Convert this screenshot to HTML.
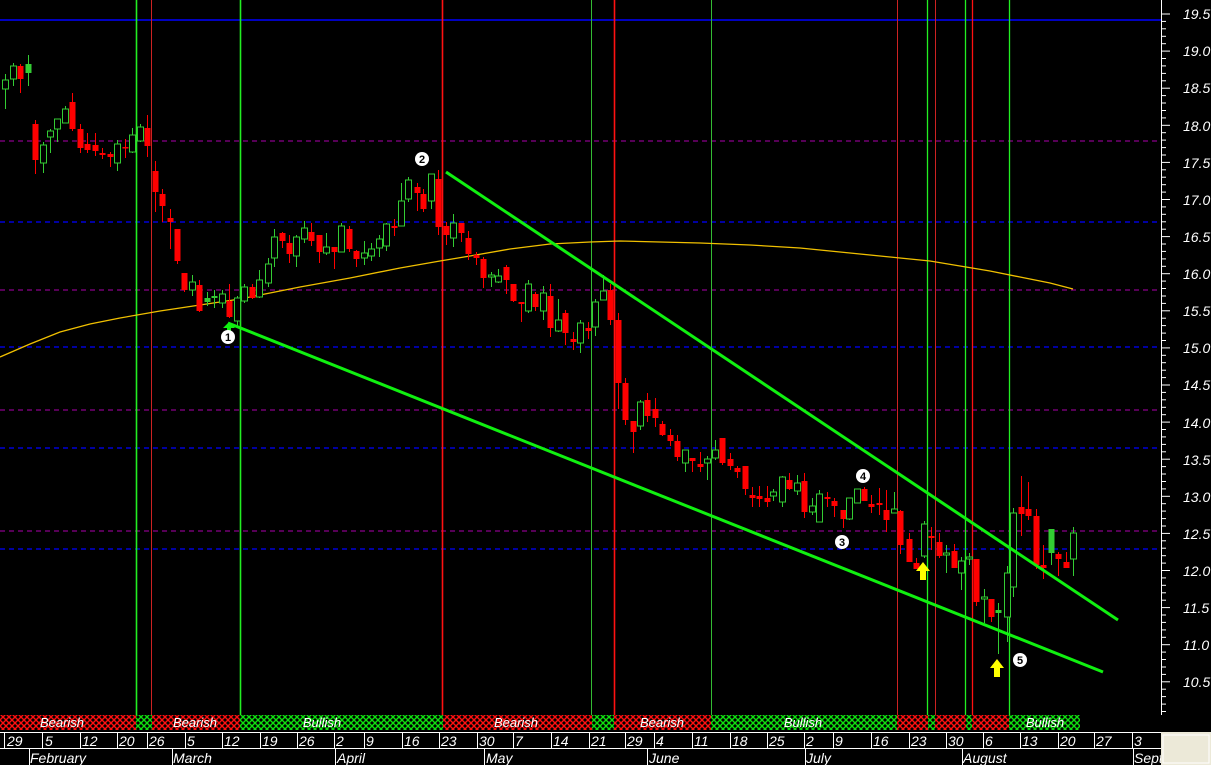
<!DOCTYPE html>
<html><head><meta charset="utf-8"><style>
html,body{margin:0;padding:0;background:#000;width:1211px;height:765px;overflow:hidden}
svg{display:block}
text{font-family:"Liberation Sans",sans-serif;font-style:italic;fill:#fff}
</style></head><body>
<svg id="c" width="1211" height="765" viewBox="0 0 1211 765" xmlns="http://www.w3.org/2000/svg">
<defs>
<pattern id="pr" width="6" height="6" patternUnits="userSpaceOnUse"><rect width="6" height="6" fill="#000"/><path d="M0 0L6 6M6 0L0 6" stroke="#ff1010" stroke-width="1.4"/></pattern>
<pattern id="pg" width="6" height="6" patternUnits="userSpaceOnUse"><rect width="6" height="6" fill="#000"/><path d="M0 0L6 6M6 0L0 6" stroke="#10e010" stroke-width="1.4"/></pattern>
</defs>
<rect width="1211" height="765" fill="#000"/>
<line x1="0" y1="20" x2="1161" y2="20" stroke="#0000ff" stroke-width="1.5"/>
<g stroke-dasharray="5,4" stroke-width="1.2">
<line x1="0" y1="141" x2="1161" y2="141" stroke="#8a008a"/>
<line x1="0" y1="222" x2="1161" y2="222" stroke="#0000ff"/>
<line x1="0" y1="290" x2="1161" y2="290" stroke="#8a008a"/>
<line x1="0" y1="347" x2="1161" y2="347" stroke="#0000ff"/>
<line x1="0" y1="410" x2="1161" y2="410" stroke="#8a008a"/>
<line x1="0" y1="448" x2="1161" y2="448" stroke="#0000ff"/>
<line x1="0" y1="531" x2="1161" y2="531" stroke="#8a008a"/>
<line x1="0" y1="549" x2="1161" y2="549" stroke="#0000ff"/>
</g>
<g>
<line x1="136.5" y1="0" x2="136.5" y2="715" stroke="#22ee22" stroke-width="1.6"/>
<line x1="151.5" y1="0" x2="151.5" y2="715" stroke="#cc2222" stroke-width="1"/>
<line x1="240.5" y1="0" x2="240.5" y2="715" stroke="#22ee22" stroke-width="1.6"/>
<line x1="442.5" y1="0" x2="442.5" y2="715" stroke="#ff1111" stroke-width="1.6"/>
<line x1="591.5" y1="0" x2="591.5" y2="715" stroke="#33bb33" stroke-width="1"/>
<line x1="614.5" y1="0" x2="614.5" y2="715" stroke="#ff1111" stroke-width="1.6"/>
<line x1="711.5" y1="0" x2="711.5" y2="715" stroke="#33bb33" stroke-width="1"/>
<line x1="897.5" y1="0" x2="897.5" y2="715" stroke="#cc2222" stroke-width="1"/>
<line x1="927.5" y1="0" x2="927.5" y2="715" stroke="#22ee22" stroke-width="1.3"/>
<line x1="935.5" y1="0" x2="935.5" y2="715" stroke="#cc2222" stroke-width="1"/>
<line x1="965.5" y1="0" x2="965.5" y2="715" stroke="#22ee22" stroke-width="1.3"/>
<line x1="972.5" y1="0" x2="972.5" y2="715" stroke="#ff1111" stroke-width="1.3"/>
<line x1="1009.5" y1="0" x2="1009.5" y2="715" stroke="#22ee22" stroke-width="1.3"/>
</g>
<polyline fill="none" stroke="#f0c000" stroke-width="1.3" points="0,357 30,344 60,332 90,324 120,318 160,311 200,305 240,299 270,293 300,287 350,278 400,268 440,261 470,256 510,249 550,244 590,242 620,241 660,242 700,243 750,245 800,248 850,253 900,258 930,261 960,266 990,271 1020,277 1050,283 1073,289"/>
<g id="candles"></g>
<line x1="446" y1="172" x2="1118" y2="620" stroke="#10f010" stroke-width="3"/>
<line x1="228" y1="323" x2="1103" y2="672" stroke="#10f010" stroke-width="3"/>
<path d="M229 322 L223 328 L227 328 L227 334 L231 334 L231 328 L235 328 Z" fill="#10f010"/>
<path d="M923 562 L916 571 L920 571 L920 580 L926 580 L926 571 L930 571 Z" fill="#ffff00"/>
<path d="M997 659 L990 668 L994 668 L994 677 L1000 677 L1000 668 L1004 668 Z" fill="#ffff00"/>
<g font-size="11" font-weight="bold" text-anchor="middle">
<circle cx="228" cy="337" r="7" fill="#fff"/><text x="228" y="341" style="fill:#000;font-style:normal">1</text>
<circle cx="422" cy="159" r="7" fill="#fff"/><text x="422" y="163" style="fill:#000;font-style:normal">2</text>
<circle cx="842" cy="542" r="7" fill="#fff"/><text x="842" y="546" style="fill:#000;font-style:normal">3</text>
<circle cx="863" cy="476" r="7" fill="#fff"/><text x="863" y="480" style="fill:#000;font-style:normal">4</text>
<circle cx="1020" cy="660" r="7" fill="#fff"/><text x="1020" y="664" style="fill:#000;font-style:normal">5</text>
</g>
<line x1="1161.5" y1="0" x2="1161.5" y2="715" stroke="#fff" stroke-width="1"/>
<g id="ticks" stroke="#fff"></g>
<g font-size="14">
<text x="1183" y="19">19.5</text><text x="1183" y="56">19.0</text><text x="1183" y="93">18.5</text><text x="1183" y="131">18.0</text><text x="1183" y="168">17.5</text><text x="1183" y="205">17.0</text><text x="1183" y="242">16.5</text><text x="1183" y="279">16.0</text><text x="1183" y="316">15.5</text><text x="1183" y="353">15.0</text><text x="1183" y="390">14.5</text><text x="1183" y="428">14.0</text><text x="1183" y="465">13.5</text><text x="1183" y="502">13.0</text><text x="1183" y="539">12.5</text><text x="1183" y="576">12.0</text><text x="1183" y="613">11.5</text><text x="1183" y="650">11.0</text><text x="1183" y="687">10.5</text>
</g>
<g>
<rect x="0" y="715" width="136" height="15" fill="url(#pr)"/>
<rect x="136" y="715" width="16" height="15" fill="url(#pg)"/>
<rect x="152" y="715" width="88" height="15" fill="url(#pr)"/>
<rect x="240" y="715" width="203" height="15" fill="url(#pg)"/>
<rect x="443" y="715" width="149" height="15" fill="url(#pr)"/>
<rect x="592" y="715" width="22" height="15" fill="url(#pg)"/>
<rect x="614" y="715" width="97" height="15" fill="url(#pr)"/>
<rect x="711" y="715" width="186" height="15" fill="url(#pg)"/>
<rect x="897" y="715" width="31" height="15" fill="url(#pr)"/>
<rect x="928" y="715" width="7" height="15" fill="url(#pg)"/>
<rect x="935" y="715" width="31" height="15" fill="url(#pr)"/>
<rect x="966" y="715" width="6" height="15" fill="url(#pg)"/>
<rect x="972" y="715" width="37" height="15" fill="url(#pr)"/>
<rect x="1009" y="715" width="71" height="15" fill="url(#pg)"/>
</g>
<g font-size="13" text-anchor="middle">
<text x="62" y="727">Bearish</text><text x="195" y="727">Bearish</text><text x="322" y="727">Bullish</text><text x="516" y="727">Bearish</text><text x="662" y="727">Bearish</text><text x="803" y="727">Bullish</text><text x="1045" y="727">Bullish</text>
</g>
<rect x="0" y="731" width="1161" height="34" fill="#000"/>
<line x1="0" y1="732.5" x2="1161" y2="732.5" stroke="#fff"/>
<line x1="0" y1="748.5" x2="1161" y2="748.5" stroke="#fff"/>
<g id="seps" stroke="#fff"></g>
<g font-size="14">
<text x="7" y="746">29</text><text x="45" y="746">5</text><text x="82" y="746">12</text><text x="119" y="746">20</text><text x="149" y="746">26</text><text x="187" y="746">5</text><text x="224" y="746">12</text><text x="262" y="746">19</text><text x="299" y="746">26</text><text x="336" y="746">2</text><text x="366" y="746">9</text><text x="404" y="746">16</text><text x="441" y="746">23</text><text x="479" y="746">30</text><text x="515" y="746">7</text><text x="553" y="746">14</text><text x="591" y="746">21</text><text x="627" y="746">29</text><text x="656" y="746">4</text><text x="694" y="746">11</text><text x="732" y="746">18</text><text x="769" y="746">25</text><text x="806" y="746">2</text><text x="835" y="746">9</text><text x="873" y="746">16</text><text x="911" y="746">23</text><text x="948" y="746">30</text><text x="985" y="746">6</text><text x="1022" y="746">13</text><text x="1060" y="746">20</text><text x="1096" y="746">27</text><text x="1134" y="746">3</text>
<text x="30" y="763">February</text><text x="173" y="763">March</text><text x="337" y="763">April</text><text x="486" y="763">May</text><text x="649" y="763">June</text><text x="806" y="763">July</text><text x="963" y="763">August</text><text x="1134" y="763">Sept</text>
</g>
<rect x="1161" y="732" width="50" height="33" fill="#ece9d8"/>
<rect x="1163" y="735" width="46" height="28" fill="none" stroke="#fff" stroke-width="1"/>
</svg>
<script>
var NS="http://www.w3.org/2000/svg";
function el(t,a,p){var e=document.createElementNS(NS,t);for(var k in a)e.setAttribute(k,a[k]);p.appendChild(e);return e;}
var C=[
[5,80,89,74,109,'g'],[13,66,79,63,86,'g'],[20,66,79,64,93,'r'],[28,64,73,55,86,'G'],
[35,124,160,120,174,'r'],[43,145,163,142,173,'g'],[50,131,137,129,153,'g'],[57,119,129,119,142,'g'],[65,109,123,106,123,'g'],[72,102,129,93,131,'r'],[80,129,148,124,153,'r'],[87,144,150,133,153,'r'],[95,145,151,133,156,'r'],[102,153,155,148,159,'r'],[110,154,157,152,167,'r'],[117,144,163,140,171,'g'],[125,147,148,139,158,'r'],[132,135,152,128,153,'g'],[140,127,141,124,142,'g'],[147,128,146,115,157,'r'],
[155,171,192,161,212,'r'],[162,194,206,189,222,'r'],[170,218,222,209,249,'r'],[177,229,261,229,264,'r'],[184,273,290,273,292,'r'],[192,282,290,275,296,'g'],[199,285,311,280,312,'r'],[207,298,302,292,306,'G'],[214,296,298,290,308,'G'],[222,294,303,290,308,'g'],[229,301,317,284,318,'r'],[237,298,321,296,327,'g'],[244,287,301,284,303,'g'],[252,287,298,284,299,'r'],[259,280,297,270,298,'g'],[268,264,283,258,287,'g'],[274,237,258,229,267,'g'],[282,233,241,232,248,'r'],[289,243,254,235,263,'r'],[296,237,256,235,267,'g'],[304,228,239,221,243,'g'],[311,232,241,223,246,'r'],[319,235,252,235,263,'r'],[326,247,253,233,255,'g'],[334,247,252,247,269,'r'],[341,226,252,223,252,'g'],[349,229,249,226,252,'r'],[356,251,259,250,267,'r'],[364,253,258,241,265,'g'],[371,249,256,243,261,'g'],[379,239,248,235,257,'g'],[386,224,246,223,251,'g'],[394,226,228,219,236,'r'],[401,201,226,183,226,'g'],[408,180,199,177,202,'g'],[417,187,193,183,211,'r'],[423,194,209,189,212,'r'],[431,174,201,174,209,'g'],[438,179,227,170,235,'r'],
[446,226,235,222,245,'r'],[453,223,238,214,247,'g'],[461,223,233,223,242,'r'],[468,238,254,231,260,'r'],[476,255,258,252,265,'r'],[483,259,278,257,288,'r'],[491,275,277,272,287,'g'],[498,276,282,269,283,'g'],[506,267,280,265,294,'r'],[513,284,301,284,302,'r'],[521,302,304,302,322,'r'],[528,284,311,280,313,'g'],[535,294,307,292,311,'r'],[543,293,311,286,320,'g'],[550,296,328,284,337,'r'],[558,320,331,299,332,'g'],[565,313,333,310,345,'r'],[573,339,342,332,350,'r'],[580,323,343,320,353,'g'],[588,328,331,322,339,'r'],[595,302,327,299,336,'g'],[603,291,300,275,300,'g'],[610,290,320,284,325,'r'],[618,320,383,313,409,'r'],[625,383,420,378,425,'r'],[633,421,432,421,453,'r'],[640,402,426,400,430,'g'],[647,400,416,393,422,'r'],[655,409,418,398,427,'r'],[662,424,435,421,436,'r'],[670,435,441,429,446,'r'],[677,441,457,435,461,'r'],[685,450,463,450,472,'g'],[692,458,461,458,472,'r'],[700,464,467,452,472,'r'],[707,459,463,456,480,'g'],[715,450,458,440,460,'g'],[722,438,463,438,465,'r'],[730,459,466,453,470,'r'],
[737,468,472,466,478,'r'],[745,466,489,466,495,'r'],[752,495,498,487,507,'r'],[759,496,499,486,507,'r'],[767,498,502,486,507,'r'],[773,492,496,489,501,'g'],[782,477,502,476,507,'g'],[789,480,489,473,490,'r'],[797,483,491,475,495,'g'],[804,481,512,473,518,'r'],[812,506,512,498,515,'g'],[819,494,522,490,522,'g'],[827,497,499,492,507,'r'],[834,501,506,498,517,'r'],[843,510,519,510,528,'r'],[849,498,519,498,520,'g'],[857,489,503,489,503,'g'],[864,489,501,487,501,'r'],[871,504,507,495,513,'r'],[879,503,505,488,515,'r'],[886,510,520,490,532,'r'],[894,509,513,492,513,'g'],[900,511,545,510,554,'r'],[909,539,562,533,562,'r'],[916,563,569,558,569,'r'],[924,524,556,521,558,'g'],[931,536,538,527,550,'r'],[939,542,556,533,558,'r'],[946,553,555,545,573,'g'],[954,551,568,544,568,'r'],[961,561,573,557,590,'g'],[969,557,559,553,565,'g'],[976,559,602,559,606,'r'],[984,597,599,589,623,'g'],[991,599,617,599,622,'r'],[998,610,613,603,654,'G'],[1007,573,617,566,642,'g'],[1013,513,587,508,597,'g'],[1021,507,514,476,536,'r'],[1028,509,516,482,520,'r'],[1036,516,565,509,569,'r'],[1043,565,568,545,579,'r'],[1051,529,553,529,565,'G'],[1058,554,559,552,576,'r'],[1066,562,568,552,568,'r'],[1073,533,559,527,576,'g']
];
var g=document.getElementById('candles');
C.forEach(function(c){
 var x=c[0],t=c[1],b=c[2],h=c[3],l=c[4],k=c[5];
 var col=(k=='r')?'#ff0000':'#33cc33';
 el('line',{x1:x+.5,y1:h,x2:x+.5,y2:l,stroke:col,'stroke-width':1},g);
 var ht=Math.max(b-t,1.5);
 if(k=='g') el('rect',{x:x-2.5,y:t,width:6,height:ht,fill:'#000',stroke:col,'stroke-width':1},g);
 else el('rect',{x:x-2.5,y:t,width:6,height:ht,fill:col},g);
});
var tk=document.getElementById('ticks');
for(var i=0;i<=95;i++){var y=14+i*7.42;if(y>712)break;var major=(i%5==0);
 el('line',{x1:1161,y1:y.toFixed(1),x2:major?1170:1166,y2:y.toFixed(1),'stroke-width':1},tk);}
var S=document.getElementById('seps');
[4,42,80,117,147,185,222,260,297,334,364,402,439,477,513,551,589,625,654,692,730,767,804,833,871,909,946,983,1020,1058,1094,1132].forEach(function(x){el('line',{x1:x+.5,y1:733,x2:x+.5,y2:748},S);});
[29,172,335,484,647,805,962,1133].forEach(function(x){el('line',{x1:x+.5,y1:748,x2:x+.5,y2:765},S);});
</script>
</body></html>
